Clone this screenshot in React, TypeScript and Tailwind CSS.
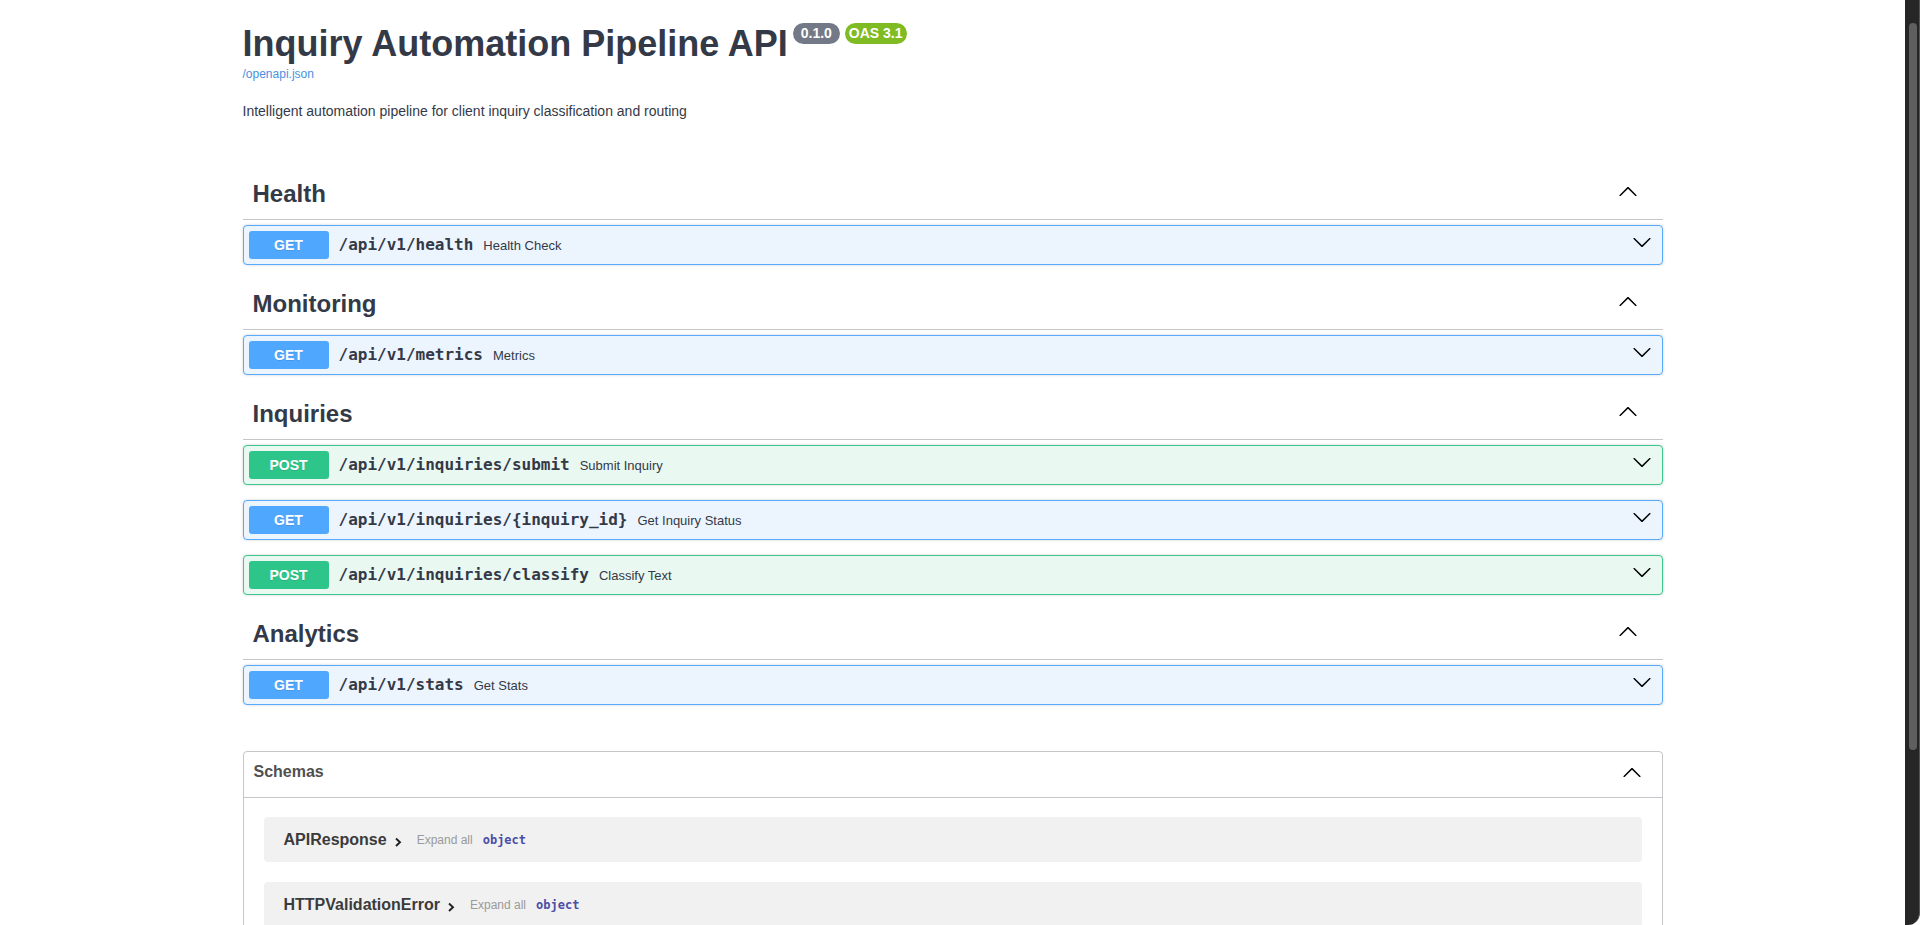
import React from "react";

const SANS = "font-['Liberation_Sans',Arial,Helvetica,sans-serif]";
const MONO = "font-['DejaVu_Sans_Mono',Menlo,monospace]";

function ArrowUp({ className = "" }: { className?: string }) {
  return (
    <svg width="20" height="20" viewBox="0 0 20 20" className={className} aria-hidden="true">
      <path
        fill="#000"
        d="M17.418 14.908c.272.268.709.268.979 0s.271-.701 0-.969l-7.908-7.83c-.27-.268-.707-.268-.979 0l-7.908 7.83c-.27.268-.27.701 0 .969.271.268.709.268.979 0L10 7.767l7.418 7.141z"
      />
    </svg>
  );
}

function ArrowDown({ className = "" }: { className?: string }) {
  return (
    <svg width="20" height="20" viewBox="0 0 20 20" className={className} aria-hidden="true">
      <path
        fill="#000"
        d="M17.418 6.109c.272-.268.709-.268.979 0s.271.701 0 .969l-7.908 7.83c-.27.268-.707.268-.979 0l-7.908-7.83c-.27-.268-.27-.701 0-.969.271-.268.709-.268.979 0L10 13.25l7.418-7.141z"
      />
    </svg>
  );
}

type Op = { method: "GET" | "POST"; path: string; summary: string };

function OpBlock({ op }: { op: Op }) {
  const isGet = op.method === "GET";
  return (
    <div
      className={`flex h-[40px] items-center rounded-[4px] border px-[5px] mb-[15px] shadow-[0_0_3px_rgba(0,0,0,0.19)] ${
        isGet ? "border-[#58aafc] bg-[#ecf5fe]" : "border-[#3fc88e] bg-[#e9f8f1]"
      }`}
    >
      <span
        className={`${SANS} h-[28px] w-[80px] shrink-0 rounded-[3px] text-center text-[14px] font-bold leading-[28px] text-white [text-shadow:0_1px_0_rgba(0,0,0,0.1)] ${
          isGet ? "bg-[#4fa7fe]" : "bg-[#2ec58a]"
        }`}
      >
        {op.method}
      </span>
      <span className={`${MONO} px-[10px] text-[16px] font-bold leading-[20px] text-[#343947]`}>{op.path}</span>
      <span className={`${SANS} flex-1 text-[13px] leading-[15px] text-[#343947]`}>{op.summary}</span>
      <ArrowDown className="mr-[5px] mt-[6px] shrink-0 self-start" />
    </div>
  );
}

function TagSection({ name, ops }: { name: string; ops: Op[] }) {
  return (
    <section className="flex flex-col">
      <div className="mb-[5px] flex h-[50px] items-start border-b border-[rgba(59,65,81,0.3)] pl-[10px] pr-[25px]">
        <h3 className={`${SANS} mt-[10px] flex-1 text-[24px] font-bold leading-[28px] text-[#343947]`}>{name}</h3>
        <ArrowUp className="mt-[11px] shrink-0" />
      </div>
      {ops.map((op) => (
        <OpBlock key={op.method + op.path} op={op} />
      ))}
    </section>
  );
}

function ModelRow({ name }: { name: string }) {
  return (
    <div className="mx-[20px] mb-[20px] flex h-[45px] items-center rounded-[4px] bg-[#f1f1f1] pl-[20px]">
      <span className={`${SANS} text-[16px] font-bold leading-[18px] text-[#3b3b3b]`}>{name}</span>
      <svg width="10" height="10" viewBox="0 0 10 10" className="ml-[6px] mt-[4px] shrink-0" aria-hidden="true">
        <polyline points="3,1.5 7,5.2 3,9" fill="none" stroke="#222" strokeWidth="1.9" />
      </svg>
      <span className={`${SANS} ml-[14px] text-[12px] leading-[14px] text-[#9a9a9a]`}>Expand all</span>
      <span className={`${MONO} ml-[10px] text-[12px] font-bold leading-[14px] text-[#4d4da6]`}>object</span>
    </div>
  );
}

export default function App() {
  const sections: { name: string; ops: Op[] }[] = [
    { name: "Health", ops: [{ method: "GET", path: "/api/v1/health", summary: "Health Check" }] },
    { name: "Monitoring", ops: [{ method: "GET", path: "/api/v1/metrics", summary: "Metrics" }] },
    {
      name: "Inquiries",
      ops: [
        { method: "POST", path: "/api/v1/inquiries/submit", summary: "Submit Inquiry" },
        { method: "GET", path: "/api/v1/inquiries/{inquiry_id}", summary: "Get Inquiry Status" },
        { method: "POST", path: "/api/v1/inquiries/classify", summary: "Classify Text" },
      ],
    },
    { name: "Analytics", ops: [{ method: "GET", path: "/api/v1/stats", summary: "Get Stats" }] },
  ];

  return (
    <div className="flex h-[925px] w-full overflow-hidden bg-white">
      <div className="h-[925px] min-w-0 flex-1 overflow-hidden">
        <div className="mx-auto flex max-w-[1460px] flex-col px-[20px] pt-[23px]">
          <div className="flex items-start">
            <h2 className={`${SANS} text-[36px] font-bold leading-[41px] text-[#343947]`}>
              Inquiry Automation Pipeline API
            </h2>
            <span
              className={`${SANS} ml-[5px] whitespace-pre rounded-[57px] bg-[#737986] px-[4px] py-[2px] text-[14px] font-bold leading-[17px] text-white`}
            >
              {" 0.1.0 "}
            </span>
            <span
              className={`${SANS} ml-[5px] rounded-[57px] bg-[#7fbb22] px-[4px] py-[2px] text-[14px] font-bold leading-[17px] text-white`}
            >
              OAS 3.1
            </span>
          </div>
          <div className={`${SANS} mt-[3px] text-[12px] leading-[14px]`}>
            <a className="text-[#4990e2]" href="#">
              /openapi.json
            </a>
          </div>
          <p className={`${SANS} mt-[22px] text-[14px] leading-[16px] text-[#343947]`}>
            Intelligent automation pipeline for client inquiry classification and routing
          </p>

          <div className="mt-[51px] flex flex-col">
            {sections.map((s) => (
              <TagSection key={s.name} name={s.name} ops={s.ops} />
            ))}
          </div>

          <section className="mt-[31px] rounded-[4px] border border-[rgba(59,65,81,0.3)]">
            <div className="flex h-[46px] items-start border-b border-[rgba(59,65,81,0.3)] pl-[10px] pr-[20px]">
              <h4 className={`${SANS} mt-[11px] flex-1 text-[16px] font-bold leading-[18px] text-[#505050]`}>
                Schemas
              </h4>
              <ArrowUp className="mt-[10px] shrink-0" />
            </div>
            <div className="pt-[19px]">
              <ModelRow name="APIResponse" />
              <ModelRow name="HTTPValidationError" />
            </div>
          </section>
        </div>
      </div>
      <div className="h-[925px] w-[15px] shrink-0 rounded-br-[12px] border-r border-[#555] bg-[#262626] pl-[4px] pt-[23px]">
        <div className="h-[727px] w-[8px] rounded-full bg-[#5f5f5f]" />
      </div>
    </div>
  );
}
